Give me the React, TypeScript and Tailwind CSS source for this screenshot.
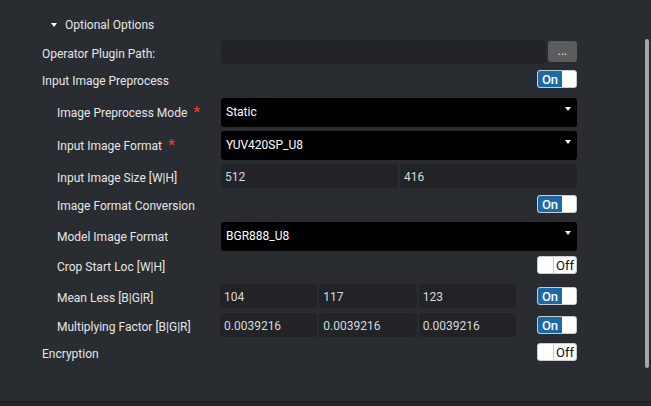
import React from "react";

function Toggle({ on }: { on: boolean }) {
  if (on)
    return (
      <div className="flex h-[18px] w-[40px] overflow-hidden rounded-[3px] border border-[#c8ccd0] bg-white">
        <div className="flex w-[24px] items-center justify-center bg-[#1b6aa5] text-[13px] font-medium leading-none text-white">
          On
        </div>
        <div className="flex-1 bg-white" />
      </div>
    );
  return (
    <div className="flex h-[18px] w-[40px] overflow-hidden rounded-[3px] border border-[#c8ccd0] bg-white">
      <div className="w-[16px] border-r border-[#c8ccd0] bg-white" />
      <div className="flex flex-1 items-center justify-center text-[13px] leading-none text-[#111]">
        Off
      </div>
    </div>
  );
}

function Label({
  text,
  nested,
  required,
  low,
}: {
  text: string;
  nested?: boolean;
  required?: boolean;
  low?: boolean;
}) {
  return (
    <div
      className={`flex w-[221px] shrink-0 items-center text-[12px] text-[#e4e6e8] ${
        nested ? "pl-[57px]" : "pl-[42px]"
      } ${low ? "pt-[3px]" : ""}`}
    >
      <span>{text}</span>
      {required && (
        <span className="ml-[6px] text-[15px] font-bold leading-none text-[#e53935]">*</span>
      )}
    </div>
  );
}

function Select({ value }: { value: string }) {
  return (
    <div className="relative flex h-[29px] w-[356px] rounded-[3px] bg-black pl-[5px] pt-[7px] text-[12px] leading-[14px] text-white">
      {value}
      <span className="absolute right-[6px] top-[9px] h-0 w-0 border-x-[3.5px] border-t-[4px] border-x-transparent border-t-white" />
    </div>
  );
}

function Field({ value, className }: { value: string; className: string }) {
  return (
    <div
      className={`flex h-[24px] items-center rounded-[3px] bg-[#212326] pl-[4px] pt-px text-[12px] text-[#d6dadf] ${className}`}
    >
      {value}
    </div>
  );
}

export default function App() {
  return (
    <div
      className="flex h-[406px] w-[651px] flex-col bg-[#232528]"
      style={{ fontFamily: "Roboto, 'Liberation Sans', sans-serif" }}
    >
      <div className="relative flex h-[402px] flex-col border-b border-[#1a1c1f] bg-[#292c30]">
        {/* scrollbar */}
        <div className="absolute left-[645px] top-[39px] h-[329px] w-[4px] rounded-full bg-[#a3a6ab]" />

        <div className="mt-[14px] flex h-[20px] items-center pl-[51px] pt-[2px] text-[12px] text-[#e4e6e8]">
          <span className="mr-[8px] h-0 w-0 border-x-[3.5px] border-t-[4px] border-x-transparent border-t-white" />
          Optional Options
        </div>

        <div className="mt-[6px] flex h-[24px]">
          <Label text="Operator Plugin Path:" low />
          <div className="flex w-[356px] gap-[2px]">
            <div className="flex-1 rounded-[3px] bg-[#212326]" />
            <div className="mt-[1px] flex h-[21px] w-[29px] items-center justify-center rounded-[3px] bg-[#5b5c5e] pb-[2px] text-[12px] text-[#e8e8e8]">
              ...
            </div>
          </div>
        </div>

        <div className="mt-[6px] flex h-[18px]">
          <Label text="Input Image Preprocess" low />
          <div className="flex w-[356px] justify-end">
            <Toggle on />
          </div>
        </div>

        <div className="mt-[10px] flex h-[29px]">
          <Label text="Image Preprocess Mode" nested required />
          <Select value="Static" />
        </div>

        <div className="mt-[4px] flex h-[29px]">
          <Label text="Input Image Format" nested required />
          <Select value="YUV420SP_U8" />
        </div>

        <div className="mt-[4px] flex h-[24px]">
          <Label text="Input Image Size [W|H]" nested low />
          <div className="flex w-[356px] gap-[2px]">
            <Field value="512" className="flex-1" />
            <Field value="416" className="flex-1" />
          </div>
        </div>

        <div className="mt-[7px] flex h-[18px]">
          <Label text="Image Format Conversion" nested low />
          <div className="flex w-[356px] justify-end">
            <Toggle on />
          </div>
        </div>

        <div className="mt-[9px] flex h-[29px]">
          <Label text="Model Image Format" nested />
          <Select value="BGR888_U8" />
        </div>

        <div className="mt-[5px] flex h-[18px]">
          <Label text="Crop Start Loc [W|H]" nested low />
          <div className="flex w-[356px] justify-end">
            <Toggle on={false} />
          </div>
        </div>

        <div className="mt-[10px] flex h-[24px] items-center">
          <Label text="Mean Less [B|G|R]" nested low />
          <div className="-ml-px flex w-[357px] items-center">
            <div className="flex w-[296px] gap-[2px]">
              <Field value="104" className="flex-1" />
              <Field value="117" className="flex-1" />
              <Field value="123" className="flex-1" />
            </div>
            <div className="flex flex-1 justify-end">
              <Toggle on />
            </div>
          </div>
        </div>

        <div className="mt-[5px] flex h-[24px] items-center">
          <Label text="Multiplying Factor [B|G|R]" nested low />
          <div className="-ml-px flex w-[357px] items-center">
            <div className="flex w-[296px] gap-[2px]">
              <Field value="0.0039216" className="flex-1" />
              <Field value="0.0039216" className="flex-1" />
              <Field value="0.0039216" className="flex-1" />
            </div>
            <div className="flex flex-1 justify-end">
              <Toggle on />
            </div>
          </div>
        </div>

        <div className="mt-[6px] flex h-[18px]">
          <Label text="Encryption" low />
          <div className="flex w-[356px] justify-end">
            <Toggle on={false} />
          </div>
        </div>
      </div>
    </div>
  );
}
